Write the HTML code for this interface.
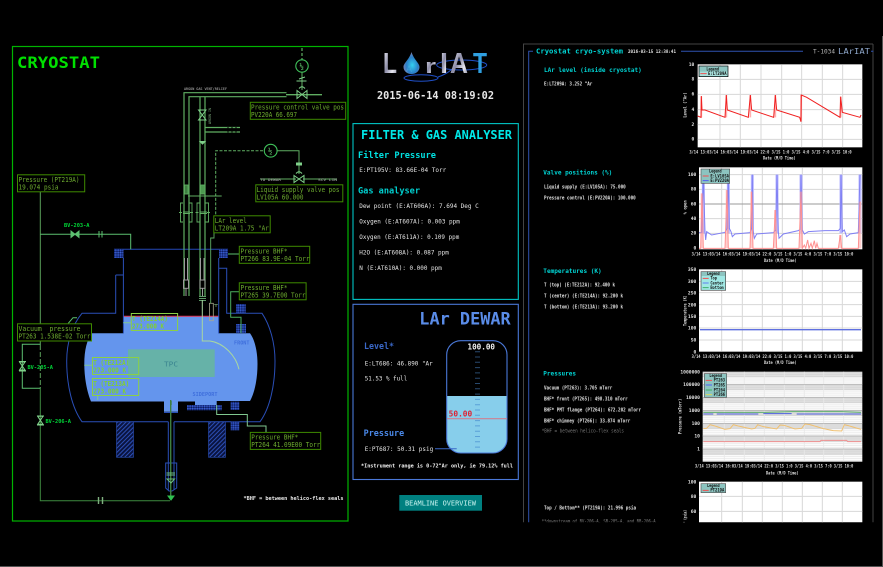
<!DOCTYPE html>
<html><head><meta charset="utf-8"><title>LArIAT Cryostat</title>
<style>
html,body{margin:0;padding:0;background:#000;width:883px;height:567px;overflow:hidden}
svg{display:block;position:absolute;left:0;top:0;filter:blur(.3px)}
text{font-family:"DejaVu Sans Mono","Liberation Mono",monospace;white-space:pre}
.b text{fill:#6fae30;font-size:6.6px}
.w{fill:#e4e4e4;font-size:6.2px}
.s{fill:#e0e0e0;font-size:4.9px;font-weight:bold}
.c{fill:#00d4d4;font-size:6.4px;font-weight:bold}
.t{fill:#111;font-size:14px;font-weight:bold}
.l{fill:#111;font-size:13px;font-weight:bold}
</style></head><body>
<svg width="883" height="567" viewBox="0 0 883 567" xmlns="http://www.w3.org/2000/svg">
<defs>
<pattern id="h" width="3" height="3" patternUnits="userSpaceOnUse" patternTransform="rotate(-45)"><rect width="3" height="3" fill="#0a1440"/><rect width="3" height="1" fill="#2c4fb5"/></pattern>
<pattern id="x" width="2.4" height="2.4" patternUnits="userSpaceOnUse"><rect width="2.4" height="2.4" fill="#1d3899"/><rect width="1.2" height="1.2" fill="#3e63d0"/><rect x="1.2" y="1.2" width="1.2" height="1.2" fill="#0c1a55"/></pattern>
<pattern id="log" width="20" height="38.8" patternUnits="userSpaceOnUse" y="35"><rect width="20" height="38.8" fill="#fff"/><rect width="20" height="17" fill="#d6d6d6"/><rect y="4" width="20" height="1.5" fill="#eee"/><rect y="10" width="20" height="1.5" fill="#eee"/><rect y="21" width="20" height="2" fill="#e2e2e2"/><rect y="27" width="20" height="2" fill="#e2e2e2"/><rect y="33" width="20" height="2" fill="#e2e2e2"/></pattern>
<linearGradient id="sil" x1="0" y1="0" x2="1" y2="1"><stop offset="0" stop-color="#f2f2f8"/><stop offset=".45" stop-color="#8d8da8"/><stop offset=".7" stop-color="#e8e8f0"/><stop offset="1" stop-color="#6d6d88"/></linearGradient>
<radialGradient id="drop" cx=".55" cy=".6" r=".6"><stop offset="0" stop-color="#35d0f0"/><stop offset=".6" stop-color="#2a80c8"/><stop offset="1" stop-color="#8080b0"/></radialGradient>
<clipPath id="cp"><rect x="520" y="40" width="363" height="482.3"/></clipPath>
<clipPath id="cg"><rect x="446.7" y="340.7" width="60.3" height="112.3" rx="14"/></clipPath>
</defs>

<!-- screen edges -->
<path d="M0 566.5H883M882.5 36V567" stroke="#777" stroke-width="1" fill="none" opacity=".7"/>

<!-- ============ CRYOSTAT ============ -->
<rect x="12.5" y="46.5" width="335.5" height="474.5" fill="#000" stroke="#00b400" stroke-width="1.2"/>
<text x="17" y="68" textLength="83" lengthAdjust="spacingAndGlyphs" style="font-size:16px;font-weight:bold;fill:#00e000">CRYOSTAT</text>

<!-- liquid -->
<path d="M123.5 316H218.5V333.3H250C255 340 257.5 352 257.5 364C257.5 378 255 392 250 401H216.7V405H195V401.5H178V411.7H164V401.5H91C87 392 84.3 378 84.3 364C84.3 350 87 340 91.7 333.3H123.5Z" fill="#6495ed"/>
<rect x="128" y="349.3" width="86.7" height="27.7" fill="#66b2a8"/>
<text x="164" y="366.5" textLength="14" lengthAdjust="spacingAndGlyphs" style="font-size:7px;fill:#3a8490">TPC</text>
<text x="234" y="344.5" textLength="15.5" lengthAdjust="spacingAndGlyphs" style="font-size:5.2px;font-weight:bold;fill:#3f6fdc">FRONT</text>
<text x="192.5" y="396" textLength="25" lengthAdjust="spacingAndGlyphs" style="font-size:5.2px;font-weight:bold;fill:#3f6fdc">SIDEPORT</text>
<path d="M123.5 316.3H218.5" stroke="#e0304f" stroke-width="1"/>

<!-- vessel outline -->
<g fill="none" stroke="#2a4fb8" stroke-width="1">
<path d="M115.7 275H123.4M115.7 275V313.3H82C72 325 66.7 343 66.7 361C66.7 385 72 408 82 421.7H168.3"/>
<path d="M123.4 258V333.3M218.7 258V333.3M218.7 268.3H226.7V313.3H262C270 325 275 343 275 361C275 385 270 408 260 421.7H174"/>
<path d="M114 249.3H228" stroke="#2448b8"/>
<path d="M168.3 421.7V490M174 421.7V490M165.7 463H176.7V488L172 491H169L165.7 488Z"/>
<path d="M164 412.5H178" />
</g>
<rect x="114" y="249" width="9.5" height="9" fill="url(#x)"/>
<rect x="219" y="249" width="9" height="9" fill="url(#x)"/>
<rect x="236" y="304" width="9.7" height="8.7" fill="url(#x)"/>
<rect x="236" y="324" width="10" height="9" fill="url(#x)"/>
<rect x="230.7" y="401.7" width="8.6" height="8.3" fill="url(#x)"/>
<rect x="230.7" y="421.7" width="8.6" height="8.6" fill="url(#x)"/>
<rect x="187" y="405" width="34.7" height="5.3" fill="url(#x)"/>
<rect x="116.5" y="421.9" width="17" height="35.4" fill="url(#h)" stroke="#2a4fb8" stroke-width=".6"/>
<rect x="208.5" y="421.9" width="17" height="35.4" fill="url(#h)" stroke="#2a4fb8" stroke-width=".6"/>

<!-- pipes -->
<g fill="none" stroke="#5fae62" stroke-width="1">
<path d="M184 296V92.7H286.5M189 296V96.7H286.5" stroke-width="1.2"/>
<path d="M200 296V96.7M205 296V96.7" stroke-width="1.2"/>
<path d="M205 127.5H240M205 132H240" stroke-width="1.2"/>
<path d="M228 127V132.5M232 127V132.5M236 127V132.5" stroke="#000" stroke-width="1"/>
<path d="M286 94.7H322" stroke="#5fae62" stroke-width="1.3"/>
<path d="M302 72.5V90"/>
<path d="M260 179H296M303 179H337" stroke-width="1"/>
<path d="M277.5 150.7H299V174" stroke-width="1"/>
<path d="M188 196H221.7" stroke-width="1"/>
</g>
<path d="M302 48V60" stroke="#5fae62" stroke-width="1.2" stroke-dasharray="3 2"/>
<path d="M263 150.7H215.7V216" fill="none" stroke="#5fae62" stroke-width="1" stroke-dasharray="3 1.5"/>
<circle cx="302" cy="66" r="6.2" fill="none" stroke="#3fc05a" stroke-width="1.1"/>
<circle cx="270.7" cy="150.7" r="6.4" fill="none" stroke="#3fc05a" stroke-width="1.1"/>
<text x="299.5" y="69" style="font-size:7px;font-weight:bold;fill:#5fbe6a">½</text>
<text x="268" y="153.7" style="font-size:7px;font-weight:bold;fill:#5fbe6a">½</text>
<g fill="none" stroke="#7fd08a" stroke-width="1">
<path d="M297 90.5L307 98.5V90.5L297 98.5ZM299 88.5Q302 85 305 88.5"/>
<path d="M296.5 81H306.5M299 79L305 77"/>
<path d="M294 175.5L304 182.5V175.5L294 182.5ZM296 173.5Q299 170 302 173.5"/>
<path d="M296.5 163H301.5V165H296.5Z" fill="#7fd08a"/>
<path d="M198.5 110L206 120H198.5L206 110Z"/>
<path d="M200 141.5H205L202.5 144Z" fill="#7fd08a"/>
</g>
<!-- bulges and flanges -->
<g fill="none" stroke="#5fae62" stroke-width=".9">
<rect x="184.5" y="185" width="3.5" height="9" fill="#3e7e40"/>
<rect x="200.5" y="185" width="4.5" height="9" fill="#4d9a50"/>
<path d="M183 203H180.5V222H183M189 203H192V222H189M183 212H190M183 213.5H190"/>
<path d="M199.5 203H197V222H199.5M205.5 203H208.5V222H205.5M199.5 212H207M199.5 213.5H207"/>
<path d="M179 212.5H182M190 212.5H193M195.5 212.5H198.5M207 212.5H210"/>
</g>
<g fill="none" stroke="#9c9c9c" stroke-width="1">
<path d="M184.5 258V280M187.5 258V280M200.5 258V280M204 258V280"/>
<rect x="183.5" y="280" width="5" height="8.3"/><rect x="200" y="280" width="5" height="8.3"/>
<path d="M186 288V296M202.5 288V296"/>
</g>
<path d="M199 296.5H206M199 298.5H206M199 300.5H206" stroke="#7fd08a" stroke-width=".8"/>
<path d="M202.3 300V341H210C224 343 236 356 239 369.3" fill="none" stroke="#a8d8a0" stroke-width="1"/>
<rect x="209.5" y="303.3" width="3.8" height="17.4" fill="none" stroke="#a8a890" stroke-width=".8"/>
<path d="M214 304.5H218M216 304V307" stroke="#8cc08c" stroke-width=".6"/>
<path d="M214 232.7V238H210.7V303.3" fill="none" stroke="#5fae62" stroke-width=".9"/>

<!-- left lines -->
<g fill="none" stroke-width="1">
<path d="M40.3 191.7V345" stroke="#5aa05a"/>
<path d="M40.3 345V388" stroke="#5aa05a" stroke-dasharray="5 2"/>
<path d="M40.3 388V500.7H170" stroke="#3e8a40"/>
<path d="M40.3 234.3H130.7V249.3" stroke="#5cc070"/>
<path d="M40.3 344.3H22.3V388.3H40.3" stroke="#5cc070"/>
<path d="M71 231V237.5L75 234.3L71 231ZM79 231V237.5L75 234.3ZM99 231V237.5M102 231V237.5" stroke="#5cc070" fill="#5cc070"/>
<path d="M19.5 362L25 370H19.5L25 362ZM37.7 416.3L43 424.3H37.7L43 416.3Z" stroke="#7fd08a"/>
<path d="M19 371H26M19 361.5H26M37 425H44M37 416H44" stroke="#7fd08a"/>
<path d="M98.5 497V504M102.5 497V504" stroke="#7fb07f" stroke-width="1.4"/>
<path d="M170.7 400V497" stroke="#3e7e40" stroke-width="1.4"/>
<path d="M166.5 473H175M166.5 475H175M167 479H174.5L171 483Z" stroke="#6fc080"/>
<path d="M168 496H174L171 500Z" fill="#30c050" stroke="#30c050"/>
<path d="M228 254H239" stroke="#5cc070"/>
<path d="M239 291.7H230.7V317.3H241V333" stroke="#4cb060"/>
<path d="M216.7 405V414.5H247.3V426H266V432.3" stroke="#80c890"/>
<path d="M68.3 323.3L73 317.7H77" stroke="#5cc070"/>
<path d="M123.3 322.7H131M84.3 365.3H92.3M97.7 395.7V400" stroke="#80c890"/>
</g>
<path d="M171 401V405" stroke="#3e7e40" stroke-width="1.4"/>
<text x="64" y="227" textLength="25.5" lengthAdjust="spacingAndGlyphs" style="font-size:4.8px;font-weight:bold;fill:#00d838">BV-203-A</text>
<text x="27.5" y="369" textLength="25.5" lengthAdjust="spacingAndGlyphs" style="font-size:4.8px;font-weight:bold;fill:#00d838">BV-205-A</text>
<text x="45.5" y="423" textLength="25.5" lengthAdjust="spacingAndGlyphs" style="font-size:4.8px;font-weight:bold;fill:#00d838">BV-206-A</text>
<text x="184" y="90" textLength="43" lengthAdjust="spacingAndGlyphs" style="font-size:3.4px;fill:#c0c0c0">ARGON GAS VENT/RELIEF</text>
<text x="260" y="181" textLength="21" lengthAdjust="spacingAndGlyphs" style="font-size:3.4px;fill:#b0b0b0">TO DEWAR</text>
<text x="318" y="181" textLength="19" lengthAdjust="spacingAndGlyphs" style="font-size:3.4px;fill:#b0b0b0">SCV LIN</text>
<text transform="translate(211,124) rotate(-90)" textLength="16" lengthAdjust="spacingAndGlyphs" style="font-size:3.2px;fill:#80b080">ARGON IN</text>
<text x="243.5" y="500" style="font-size:4.9px;font-weight:bold;fill:#e8e8e8" textLength="100" lengthAdjust="spacingAndGlyphs">*BHF = between helico-flex seals</text>

<!-- info boxes -->
<g class="b" stroke-width="1">
<g fill="#000" stroke="#3f8a00">
<rect x="250.3" y="102.3" width="95.4" height="17"/>
<rect x="255.8" y="184.8" width="87" height="17"/>
<rect x="17.5" y="174.8" width="67.2" height="17"/>
<rect x="213.8" y="215.8" width="56.4" height="17"/>
<rect x="239.3" y="246.3" width="70.4" height="17"/>
<rect x="239.3" y="282.8" width="66.8" height="17"/>
<rect x="17.5" y="323.8" width="74" height="17.2"/>
<rect x="250.3" y="432.4" width="70.4" height="17"/>
</g>
<g fill="none" stroke="#8bd044">
<rect x="131.3" y="313.5" width="46.3" height="17"/>
<rect x="92.5" y="357.5" width="46.2" height="17"/>
<rect x="92.5" y="378.5" width="46.2" height="17"/>
</g>
<text x="251" y="109.5" textLength="93" lengthAdjust="spacingAndGlyphs">Pressure control valve pos</text>
<text x="251" y="117" textLength="46" lengthAdjust="spacingAndGlyphs">PV220A 66.697</text>
<text x="256.5" y="192" textLength="83" lengthAdjust="spacingAndGlyphs">Liquid supply valve pos</text>
<text x="256.5" y="199.5" textLength="47" lengthAdjust="spacingAndGlyphs">LV105A 60.000</text>
<text x="18.5" y="182" textLength="61" lengthAdjust="spacingAndGlyphs">Pressure (PT219A)</text>
<text x="18.5" y="189.5" textLength="40" lengthAdjust="spacingAndGlyphs">19.074 psia</text>
<text x="214.8" y="223" textLength="32" lengthAdjust="spacingAndGlyphs">LAr level</text>
<text x="214.8" y="230.5" textLength="54" lengthAdjust="spacingAndGlyphs">LT209A 1.75 "Ar</text>
<text x="240.5" y="253.5" textLength="47" lengthAdjust="spacingAndGlyphs">Pressure BHF*</text>
<text x="240.5" y="261" textLength="69" lengthAdjust="spacingAndGlyphs">PT266 83.9E-04 Torr</text>
<text x="240.5" y="290" textLength="47" lengthAdjust="spacingAndGlyphs">Pressure BHF*</text>
<text x="240.5" y="297.5" textLength="65" lengthAdjust="spacingAndGlyphs">PT265 39.7E00 Torr</text>
<text x="18.5" y="331" textLength="62" lengthAdjust="spacingAndGlyphs">Vacuum  pressure</text>
<text x="18.5" y="338.7" textLength="72" lengthAdjust="spacingAndGlyphs">PT263 1.538E-02 Torr</text>
<text x="251.3" y="439.5" textLength="47" lengthAdjust="spacingAndGlyphs">Pressure BHF*</text>
<text x="251.3" y="447" textLength="69" lengthAdjust="spacingAndGlyphs">PT264 41.09E00 Torr</text>
<g style="font-weight:bold">
<text x="132" y="321" textLength="36" lengthAdjust="spacingAndGlyphs" style="fill:#80d030">T (TE214A)</text>
<text x="132" y="328.7" textLength="32" lengthAdjust="spacingAndGlyphs" style="fill:#80d030">273.000 K</text>
<text x="93.2" y="365" textLength="36" lengthAdjust="spacingAndGlyphs" style="fill:#80d030">T (TE212A)</text>
<text x="93.2" y="372.7" textLength="33" lengthAdjust="spacingAndGlyphs" style="fill:#80d030">273.000 K</text>
<text x="93.2" y="386" textLength="36" lengthAdjust="spacingAndGlyphs" style="fill:#80d030">T (TE213A)</text>
<text x="93.2" y="393.7" textLength="33" lengthAdjust="spacingAndGlyphs" style="fill:#80d030">273.000 K</text>
</g>
</g>

<!-- ============ CENTER ============ -->
<path d="M383.5 52H389.5V68H396V73H383.5Z" fill="none"/>
<ellipse cx="461.7" cy="65" rx="25" ry="5" fill="none" stroke="#2050c8" stroke-width="1"/>
<ellipse cx="421" cy="78" rx="17" ry="3.2" fill="none" stroke="#2050c8" stroke-width="1"/>
<path d="M438 77Q447 74 452 69" fill="none" stroke="#2050c8" stroke-width="1"/>
<path d="M411.5 52C409 60 403.5 63 403.5 67C403.5 71 407 74 411.5 74C416 74 419.5 71 419.5 67C419.5 63 414 60 411.5 52Z" fill="url(#drop)"/>
<text x="383" y="73" textLength="14" lengthAdjust="spacingAndGlyphs" style="font-family:'Liberation Sans',sans-serif;font-weight:bold;font-size:29px;fill:url(#sil)">L</text>
<text x="406" y="72" style="font-family:'Liberation Sans',sans-serif;font-size:9px;fill:#5fb0e0;opacity:.45">A</text>
<text x="425" y="73" textLength="11" lengthAdjust="spacingAndGlyphs" style="font-family:'Liberation Sans',sans-serif;font-weight:bold;font-size:20px;fill:url(#sil)">r</text>
<text x="440" y="73" textLength="8" lengthAdjust="spacingAndGlyphs" style="font-family:'Liberation Sans',sans-serif;font-weight:bold;font-size:29px;fill:url(#sil)">I</text>
<text x="450" y="73" textLength="18" lengthAdjust="spacingAndGlyphs" style="font-family:'Liberation Sans',sans-serif;font-weight:bold;font-size:29px;fill:url(#sil)">A</text>
<text x="473" y="73" textLength="14" lengthAdjust="spacingAndGlyphs" style="font-family:'Liberation Sans',sans-serif;font-weight:bold;font-size:29px;fill:#2f9fe0">T</text>
<text x="377" y="99" textLength="117" lengthAdjust="spacingAndGlyphs" style="font-size:11px;fill:#e8e8e8;font-weight:bold">2015-06-14 08:19:02</text>

<rect x="353" y="123.6" width="165.3" height="175.8" fill="none" stroke="#00c4c4" stroke-width="1.1"/>
<text x="361" y="139" textLength="151" lengthAdjust="spacingAndGlyphs" style="font-size:12px;font-weight:bold;fill:#00e8e8">FILTER &amp; GAS ANALYSER</text>
<text x="358" y="158" textLength="78" lengthAdjust="spacingAndGlyphs" style="font-size:8.4px;font-weight:bold;fill:#00e0e0">Filter Pressure</text>
<text class="w" x="359.3" y="172" textLength="87" lengthAdjust="spacingAndGlyphs">E:PT195V: 83.66E-04 Torr</text>
<text x="358" y="193.5" textLength="62" lengthAdjust="spacingAndGlyphs" style="font-size:8.4px;font-weight:bold;fill:#00d0d0">Gas analyser</text>
<text class="w" x="359.3" y="208" textLength="119.5" lengthAdjust="spacingAndGlyphs">Dew point (E:AT606A): 7.694 Deg C</text>
<text class="w" x="359.3" y="223.7" textLength="100.5" lengthAdjust="spacingAndGlyphs">Oxygen (E:AT607A): 0.003 ppm</text>
<text class="w" x="359.3" y="239" textLength="100" lengthAdjust="spacingAndGlyphs">Oxygen (E:AT611A): 0.109 ppm</text>
<text class="w" x="359.3" y="254.3" textLength="89.5" lengthAdjust="spacingAndGlyphs">H2O (E:AT608A): 0.087 ppm</text>
<text class="w" x="359.3" y="270" textLength="82.5" lengthAdjust="spacingAndGlyphs">N (E:AT610A): 0.000 ppm</text>

<rect x="353" y="304.3" width="165.3" height="175.2" fill="none" stroke="#4a78d8" stroke-width="1.1"/>
<text x="419.3" y="324.5" textLength="91.4" lengthAdjust="spacingAndGlyphs" style="font-size:16.5px;font-weight:bold;fill:#5a8ce8">LAr DEWAR</text>
<text x="364" y="349" textLength="30" lengthAdjust="spacingAndGlyphs" style="font-size:8.4px;font-weight:bold;fill:#3a68c8">Level*</text>
<text class="w" x="364.7" y="365.3" textLength="68" lengthAdjust="spacingAndGlyphs">E:LT686: 46.890 "Ar</text>
<text class="w" x="364.7" y="380.7" textLength="42.5" lengthAdjust="spacingAndGlyphs">51.53 % full</text>
<text x="363.7" y="436" textLength="40.5" lengthAdjust="spacingAndGlyphs" style="font-size:8.4px;font-weight:bold;fill:#4a88e8">Pressure</text>
<text class="w" x="364.7" y="451" textLength="68.5" lengthAdjust="spacingAndGlyphs">E:PT687: 50.31 psig</text>
<text x="361" y="467.3" textLength="152" lengthAdjust="spacingAndGlyphs" style="font-size:5.2px;font-weight:bold;fill:#f0f0f0">*Instrument range is 0-72"Ar only, ie 79.12% full</text>

<rect x="446.7" y="396" width="60.3" height="57" fill="#87ceeb" clip-path="url(#cg)"/>
<rect x="446.7" y="340.7" width="60.3" height="112.3" rx="14" fill="none" stroke="#4a78d8" stroke-width="1.1"/>
<path d="M475 351.7h5M475 357h5M475 362.3h5M475 367.6h5M475 372.9h5M475 378.2h5M475 383.5h5M475 388.8h5M475 394.1h5" stroke="#28496e" stroke-width="1"/>
<path d="M475 399.4h5M475 404.7h5M475 410h5M475 415.3h5M475 420.6h5M475 425.9h5M475 431.2h5M475 436.5h5M475 441.8h5M475 447.1h5" stroke="#5aa0d8" stroke-width="1"/>
<path d="M447 418.7H507" stroke="#cc8090" stroke-width="1.2"/>
<path d="M435 448.7H456.7" stroke="#3a68c8" stroke-width="1"/>
<text x="467.5" y="349.5" textLength="27.5" lengthAdjust="spacingAndGlyphs" style="font-size:7.6px;font-weight:bold;fill:#f0f0f0">100.00</text>
<text x="448.7" y="416.7" textLength="23.5" lengthAdjust="spacingAndGlyphs" style="font-size:7.6px;font-weight:bold;fill:#e02030">50.00</text>

<rect x="399.3" y="495" width="82.7" height="15.7" fill="#008080"/>
<text x="405" y="505.3" textLength="71" lengthAdjust="spacingAndGlyphs" style="font-size:7px;fill:#c8f4f0">BEAMLINE OVERVIEW</text>

<!-- ============ RIGHT PANEL ============ -->
<g clip-path="url(#cp)">
<path d="M873 44H523.5V523M873 44V523" fill="none" stroke="#444" stroke-width="1"/>
<path d="M528.7 523V51.3H533M681 51.3H803M871 51.3H873.4" fill="none" stroke="#2f52b0" stroke-width="1"/>
<text x="536" y="53.5" textLength="87" lengthAdjust="spacingAndGlyphs" class="c" style="font-size:7px">Cryostat cryo-system</text>
<text x="628" y="53" textLength="48" lengthAdjust="spacingAndGlyphs" class="s" style="font-size:4.6px">2016-03-15 12:38:41</text>
<text x="813" y="53.5" textLength="22" lengthAdjust="spacingAndGlyphs" style="font-size:6.4px;fill:#b8b8b8">T-1034</text>
<text x="838" y="54" textLength="32" lengthAdjust="spacingAndGlyphs" style="font-size:8px;fill:#8fa8cc">LArIAT</text>

<text class="c" x="544" y="72" textLength="97.7" lengthAdjust="spacingAndGlyphs">LAr level (inside cryostat)</text>
<text class="s" x="544" y="85.7" textLength="48.3" lengthAdjust="spacingAndGlyphs">E:LT209A: 3.252 "Ar</text>
<text class="c" x="543.3" y="174.3" textLength="69" lengthAdjust="spacingAndGlyphs">Valve positions (%)</text>
<text class="s" x="544" y="188.3" textLength="81.7" lengthAdjust="spacingAndGlyphs">Liquid supply (E:LV105A): 75.000</text>
<text class="s" x="544" y="199.3" textLength="91.7" lengthAdjust="spacingAndGlyphs">Pressure control (E:PV220A): 100.000</text>
<text class="c" x="543.3" y="273" textLength="58.4" lengthAdjust="spacingAndGlyphs">Temperatures (K)</text>
<text class="s" x="544" y="286.7" textLength="71" lengthAdjust="spacingAndGlyphs">T (top) (E:TE212A): 92.400 k</text>
<text class="s" x="544" y="297.7" textLength="79" lengthAdjust="spacingAndGlyphs">T (center) (E:TE214A): 92.200 k</text>
<text class="s" x="544" y="308.7" textLength="79" lengthAdjust="spacingAndGlyphs">T (bottom) (E:TE213A): 93.200 k</text>
<text class="c" x="543.3" y="375.3" textLength="32.7" lengthAdjust="spacingAndGlyphs">Pressures</text>
<text class="s" x="544" y="389.3" textLength="68.3" lengthAdjust="spacingAndGlyphs">Vacuum (PT263): 3.705 mTorr</text>
<text class="s" x="544" y="400.3" textLength="83.7" lengthAdjust="spacingAndGlyphs">BHF* front (PT265): 498.310 mTorr</text>
<text class="s" x="544" y="411.3" textLength="97" lengthAdjust="spacingAndGlyphs">BHF* PMT flange (PT264): 672.202 mTorr</text>
<text class="s" x="544" y="422.3" textLength="86.3" lengthAdjust="spacingAndGlyphs">BHF* chimney (PT266): 33.874 mTorr</text>
<text x="541.7" y="432.7" textLength="82.3" lengthAdjust="spacingAndGlyphs" style="font-size:4.9px;fill:#777">*BHF = between helico-flex seals</text>
<text class="s" x="544" y="509.7" textLength="92" lengthAdjust="spacingAndGlyphs">Top / Bottom** (PT219A): 21.996 psia</text>
<text x="541.7" y="523" textLength="114" lengthAdjust="spacingAndGlyphs" style="font-size:4.9px;fill:#777">**downstream of BV-206-A, SB-205-A, and BB-206-A</text>

<!-- Chart 1 -->
<g transform="translate(525,40) scale(.33333)">
<rect x="518" y="73" width="494" height="249" fill="#fff"/>
<path d="M585 73V322M646 73V322M708 73V322M770 73V322M830 73V322M892 73V322M953 73V322M518 118H1012M518 163H1012M518 209H1012M518 254H1012M518 298H1012" stroke="#d8d8d8" stroke-width="3"/>
<path d="M529 170V232M604 165V232M676 165V232M751 165V232M828 165V245M947 170V232" fill="none" stroke="#ffb0b0" stroke-width="5"/>
<polyline fill="none" stroke="#f02020" stroke-width="3" points="518,228 528,232 529,168 531,210 540,210 600,232 604,165 607,210 670,232 676,165 680,210 746,232 751,165 755,210 824,232 828,245 829,165 845,172 945,232 947,170 952,217 1005,232 1008,225"/>
<rect x="522" y="78" width="87" height="32" fill="#8cc4c0" stroke="#000" stroke-width="2"/>
<text class="l" x="544" y="91" textLength="38" lengthAdjust="spacingAndGlyphs">Legend</text>
<rect x="524" y="95" width="83" height="13" fill="#a8e0dc"/>
<path d="M526 101H545" stroke="#f05050" stroke-width="3"/>
<text class="l" x="549" y="105" textLength="56" lengthAdjust="spacingAndGlyphs">E:LT209A</text>
<g style="fill:#ddd" text-anchor="end">
<text class="s" style="font-size:14px" x="508" y="78" text-anchor="end">10</text>
<text class="s" style="font-size:14px" x="508" y="122" text-anchor="end">8</text>
<text class="s" style="font-size:14px" x="508" y="167" text-anchor="end">6</text>
<text class="s" style="font-size:14px" x="508" y="213" text-anchor="end">4</text>
<text class="s" style="font-size:14px" x="508" y="258" text-anchor="end">2</text>
<text class="s" style="font-size:14px" x="508" y="302" text-anchor="end">0</text>
</g>
<text class="s" style="font-size:13px" transform="translate(485,233) rotate(-90)" textLength="76" lengthAdjust="spacingAndGlyphs">Level ("Ar)</text>
<text class="s" style="font-size:14px" x="493" y="341" textLength="487" lengthAdjust="spacingAndGlyphs">3/14 13:03/14 16:03/14 19:03/14 22:0 3/15 1:0 3/15 4:0 3/15 7:0 3/15 10:0</text>
<text class="s" style="font-size:14px" x="714" y="359" textLength="98" lengthAdjust="spacingAndGlyphs">Date (M/D Time)</text>
</g>

<!-- Chart 2 -->
<g transform="translate(525,160) scale(.33333)">
<rect x="522" y="22" width="490" height="246" fill="#fff"/>
<path d="M590 22V268M652 22V268M712 22V268M772 22V268M832 22V268M892 22V268M952 22V268M522 44H1012M522 88H1012M522 176H1012M522 220H1012" stroke="#d8d8d8" stroke-width="3"/>
<path d="M522 132H1012" stroke="#999" stroke-width="3"/>
<path d="M535 44V220M610 44V220M682 44V220M756 44V220M828 44V220M948 44V220M1005 44V220" stroke="#b8b8ff" stroke-width="9"/>
<path d="M531 100V265M606 90V265M680 95V265M751 150V265M828 95V265M946 225V265M1005 125V265" stroke="#ffb8b8" stroke-width="8" opacity=".7"/>
<polyline fill="none" stroke="#8080f4" stroke-width="3" points="522,218 530,218 535,44 540,215 542,240 545,215 560,225 600,217 606,205 610,44 613,205 618,215 622,230 630,222 675,218 680,205 682,44 684,210 688,235 695,222 745,218 752,210 756,44 760,215 762,235 775,222 820,212 825,208 828,44 832,210 838,222 850,215 900,212 940,212 946,205 948,44 952,215 958,210 965,230 975,222 1000,218 1005,44"/>
<polyline fill="none" stroke="#ff9090" stroke-width="3" points="522,265 527,265 531,100 535,265 600,265 606,90 610,265 675,265 680,95 684,265 745,265 751,150 755,265 822,265 828,95 832,265 838,255 842,265 848,240 852,265 858,250 862,265 868,242 872,265 876,250 880,265 940,265 946,225 950,265 1000,265 1005,125"/>
<rect x="528" y="27" width="86" height="43" fill="#8cc4c0" stroke="#555" stroke-width="2"/>
<text class="l" x="552" y="38" textLength="38" lengthAdjust="spacingAndGlyphs">Legend</text>
<path d="M533 48H551" stroke="#f05050" stroke-width="3"/><path d="M533 62H551" stroke="#5060f0" stroke-width="3"/>
<text class="l" x="556" y="52" textLength="56" lengthAdjust="spacingAndGlyphs">E:LV105A</text>
<text class="l" x="556" y="66" textLength="56" lengthAdjust="spacingAndGlyphs">E:PV220A</text>
<text class="s" style="font-size:14px" x="514" y="48" text-anchor="end">100</text>
<text class="s" style="font-size:14px" x="514" y="92" text-anchor="end">80</text>
<text class="s" style="font-size:14px" x="514" y="136" text-anchor="end">60</text>
<text class="s" style="font-size:14px" x="514" y="180" text-anchor="end">40</text>
<text class="s" style="font-size:14px" x="514" y="224" text-anchor="end">20</text>
<text class="s" style="font-size:14px" x="514" y="269" text-anchor="end">0</text>
<text class="s" style="font-size:13px" transform="translate(485,163) rotate(-90)" textLength="42" lengthAdjust="spacingAndGlyphs">% open</text>
<text class="s" style="font-size:14px" x="500" y="287" textLength="485" lengthAdjust="spacingAndGlyphs">3/14 13:03/14 16:03/14 19:03/14 22:0 3/15 1:0 3/15 4:0 3/15 7:0 3/15 10:0</text>
<text class="s" style="font-size:14px" x="717" y="306" textLength="98" lengthAdjust="spacingAndGlyphs">Date (M/D Time)</text>

<!-- Chart 3 -->
<rect x="522" y="328" width="490" height="247" fill="#fff"/>
<path d="M590 328V575M652 328V575M712 328V575M772 328V575M832 328V575M892 328V575M952 328V575M522 364H1012M522 398H1012M522 434H1012M522 469H1012M522 504H1012M522 540H1012" stroke="#d8d8d8" stroke-width="3"/>
<path d="M525 509H1008" stroke="#5f70e0" stroke-width="4"/>
<rect x="528" y="335" width="74" height="56" fill="#8cc4c0" stroke="#555" stroke-width="2"/>
<rect x="530" y="348" width="70" height="41" fill="#a0e8e4"/>
<text class="l" x="546" y="345" textLength="38" lengthAdjust="spacingAndGlyphs">Legend</text>
<path d="M533 355H551" stroke="#f05050" stroke-width="3"/><path d="M533 369H551" stroke="#6080f0" stroke-width="3"/><path d="M533 383H551" stroke="#40b070" stroke-width="3"/>
<text class="l" x="556" y="359" textLength="20" lengthAdjust="spacingAndGlyphs">Top</text>
<text class="l" x="556" y="373" textLength="40" lengthAdjust="spacingAndGlyphs">Center</text>
<text class="l" x="556" y="387" textLength="40" lengthAdjust="spacingAndGlyphs">Bottom</text>
<text class="s" style="font-size:14px" x="514" y="333" text-anchor="end">350</text>
<text class="s" style="font-size:14px" x="514" y="369" text-anchor="end">300</text>
<text class="s" style="font-size:14px" x="514" y="403" text-anchor="end">250</text>
<text class="s" style="font-size:14px" x="514" y="439" text-anchor="end">200</text>
<text class="s" style="font-size:14px" x="514" y="474" text-anchor="end">150</text>
<text class="s" style="font-size:14px" x="514" y="509" text-anchor="end">100</text>
<text class="s" style="font-size:14px" x="514" y="545" text-anchor="end">50</text>
<text class="s" style="font-size:14px" x="514" y="580" text-anchor="end">0</text>
<text class="s" style="font-size:13px" transform="translate(485,498) rotate(-90)" textLength="92" lengthAdjust="spacingAndGlyphs">Temperature (K)</text>
<text class="s" style="font-size:14px" x="500" y="594" textLength="485" lengthAdjust="spacingAndGlyphs">3/14 13:03/14 16:03/14 19:03/14 22:0 3/15 1:0 3/15 4:0 3/15 7:0 3/15 10:0</text>
</g>

<!-- Chart 4 -->
<g transform="translate(525,360) scale(.33333)">
<text class="s" style="font-size:14px" x="717" y="12" textLength="98" lengthAdjust="spacingAndGlyphs">Date (M/D Time)</text>
<rect x="533" y="35" width="479" height="270" fill="url(#log)"/>
<path d="M598 35V305M658 35V305M718 35V305M778 35V305M838 35V305M896 35V305M956 35V305" stroke="#e8e8e8" stroke-width="3" opacity=".85"/>
<path d="M533 73H1012M533 112H1012M533 151H1012M533 190H1012M533 228H1012M533 267H1012" stroke="#aaa" stroke-width="2"/>
<polyline fill="none" stroke="#60b070" stroke-width="3" points="535,157 720,157 800,155 950,155 1008,157"/>
<path d="M535 162H565M575 162H700M715 161H800M815 162H1008" stroke="#5060e0" stroke-width="3"/>
<polyline fill="none" stroke="#f0c070" stroke-width="3" points="535,206 545,205 555,194 570,198 600,208 615,206 625,194 640,198 680,207 690,205 698,194 715,200 755,207 765,195 778,196 810,207 830,205 840,192 855,194 895,206 925,212 950,213 958,194 970,197 1008,208"/>
<polyline fill="none" stroke="#f09090" stroke-width="3" points="535,245 885,245 888,241 965,241 968,245 1008,245"/>
<rect x="538" y="41" width="67" height="71" fill="#8cc4c0" stroke="#555" stroke-width="2"/>
<text class="l" x="553" y="51" textLength="38" lengthAdjust="spacingAndGlyphs">Legend</text>
<path d="M542 61H561" stroke="#f05050" stroke-width="3"/><path d="M542 75H561" stroke="#5060f0" stroke-width="3"/><path d="M542 90H561" stroke="#40b060" stroke-width="3"/><path d="M542 104H561" stroke="#d8d860" stroke-width="3"/>
<text class="l" x="566" y="65" textLength="34" lengthAdjust="spacingAndGlyphs">PT263</text>
<text class="l" x="566" y="79" textLength="34" lengthAdjust="spacingAndGlyphs">PT265</text>
<text class="l" x="566" y="94" textLength="34" lengthAdjust="spacingAndGlyphs">PT264</text>
<text class="l" x="566" y="108" textLength="34" lengthAdjust="spacingAndGlyphs">PT266</text>
<text class="s" style="font-size:14px" x="525" y="40" text-anchor="end">1000000</text>
<text class="s" style="font-size:14px" x="525" y="78" text-anchor="end">100000</text>
<text class="s" style="font-size:14px" x="525" y="117" text-anchor="end">10000</text>
<text class="s" style="font-size:14px" x="525" y="156" text-anchor="end">1000</text>
<text class="s" style="font-size:14px" x="525" y="195" text-anchor="end">100</text>
<text class="s" style="font-size:14px" x="525" y="233" text-anchor="end">10</text>
<text class="s" style="font-size:14px" x="525" y="272" text-anchor="end">1</text>
<text class="s" style="font-size:13px" transform="translate(469,222) rotate(-90)" textLength="106" lengthAdjust="spacingAndGlyphs">Pressure (mTorr)</text>
<text class="s" style="font-size:14px" x="510" y="323" textLength="475" lengthAdjust="spacingAndGlyphs">3/14 13:03/14 16:03/14 19:03/14 22:0 3/15 1:0 3/15 4:0 3/15 7:0 3/15 10:0</text>
<text class="s" style="font-size:14px" x="723" y="343" textLength="98" lengthAdjust="spacingAndGlyphs">Date (M/D Time)</text>

<!-- Chart 5 -->
<rect x="522" y="365" width="490" height="130" fill="#fff"/>
<path d="M590 365V495M652 365V495M712 365V495M772 365V495M832 365V495M892 365V495M952 365V495M522 409H1012M522 454H1012" stroke="#d8d8d8" stroke-width="3"/>
<rect x="528" y="371" width="74" height="27" fill="#8cc4c0" stroke="#555" stroke-width="2"/>
<text class="l" x="546" y="381" textLength="38" lengthAdjust="spacingAndGlyphs">Legend</text>
<path d="M533 391H551" stroke="#f05050" stroke-width="3"/>
<text class="l" x="556" y="395" textLength="42" lengthAdjust="spacingAndGlyphs">PT219A</text>
<text class="s" style="font-size:14px" x="514" y="370" text-anchor="end">100</text>
<text class="s" style="font-size:14px" x="514" y="414" text-anchor="end">80</text>
<text class="s" style="font-size:14px" x="514" y="459" text-anchor="end">60</text>
<text class="s" style="font-size:13px" transform="translate(485,490) rotate(-90)" textLength="40" lengthAdjust="spacingAndGlyphs">P (psia)</text>
</g>
</g>
</svg>
</body></html>
